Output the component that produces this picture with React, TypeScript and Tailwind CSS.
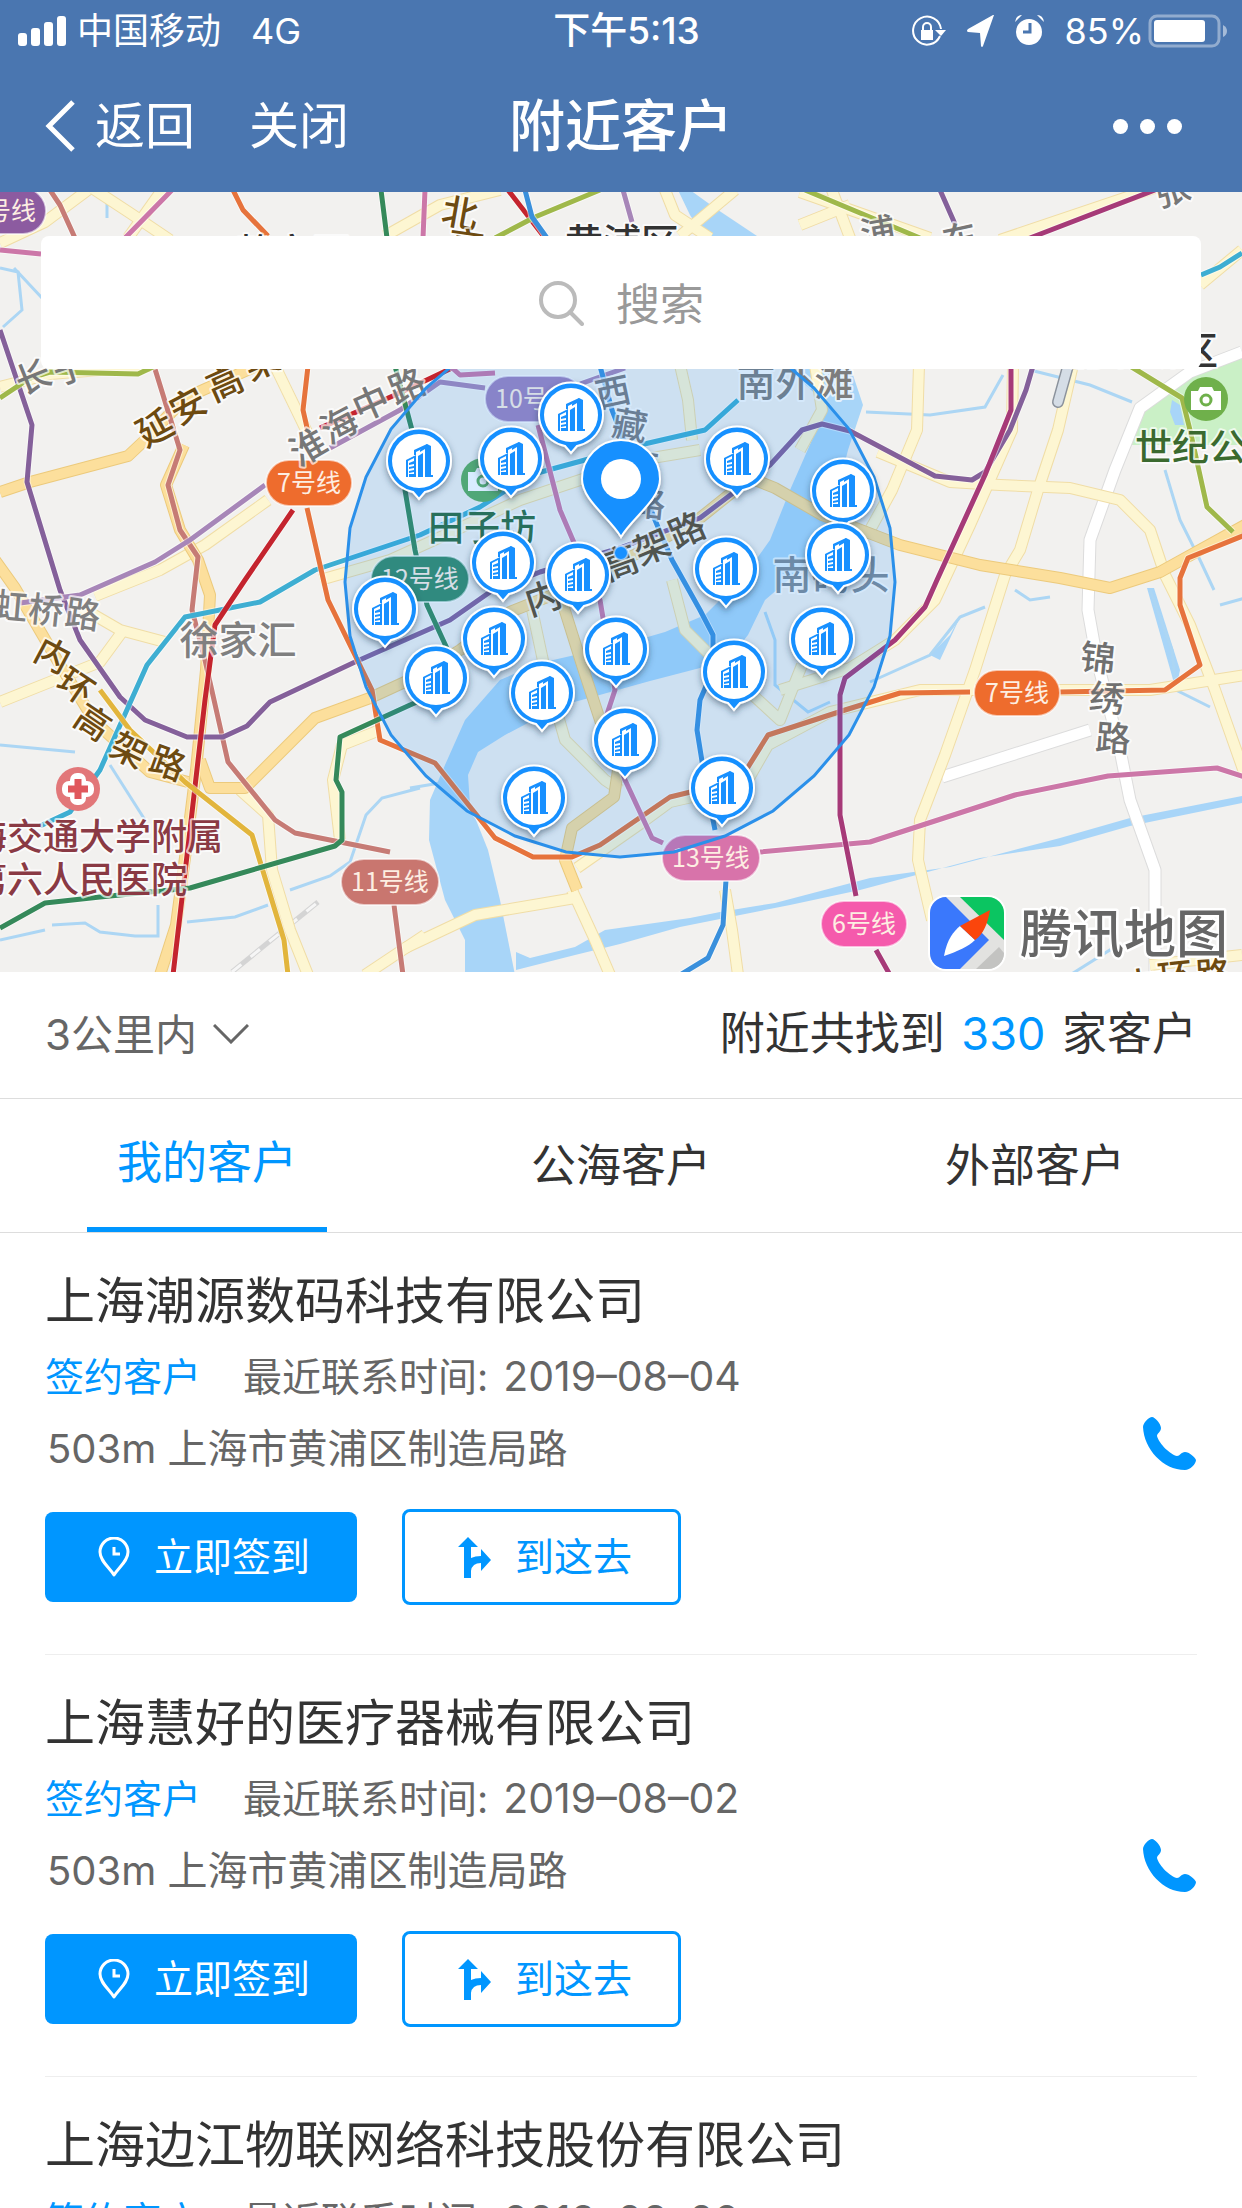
import { useState } from 'react'

interface Customer {
  name: string
  status: string
  lastContact: string
  distance: string
  address: string
}

const customers: Customer[] = [
  { name: '上海潮源数码科技有限公司', status: '签约客户', lastContact: '2019–08–04', distance: '503m', address: '上海市黄浦区制造局路' },
  { name: '上海慧好的医疗器械有限公司', status: '签约客户', lastContact: '2019–08–02', distance: '503m', address: '上海市黄浦区制造局路' },
  { name: '上海边江物联网络科技股份有限公司', status: '签约客户', lastContact: '2019–08–02', distance: '503m', address: '上海市黄浦区制造局路' },
]

const tabs = ['我的客户', '公海客户', '外部客户']

const markers = [
  [571, 415], [511, 459], [419, 461], [737, 459], [843, 491], [838, 555], [503, 563],
  [578, 575], [726, 569], [385, 609], [494, 639], [822, 639], [616, 649], [734, 672],
  [436, 678], [542, 693], [625, 740], [722, 788], [534, 798],
]

const yellowRoads = [
  'M0 243L45 222L88 190', 'M92 188L130 213L170 240', 'M162 190L128 238', 'M0 387L50 374L150 366',
  'M275 366L307 432', 'M95 596L160 570L205 545L268 500', 'M82 608L120 630L165 642', 'M122 632L100 662L50 682L0 702',
  'M240 790L268 815L272 870L290 930L308 975', 'M380 730L342 745L333 780L340 840', 'M385 236L440 205L500 190',
  'M320 580L390 560L430 542L520 500L640 460L700 450', 'M530 600L545 670L565 740L605 780L620 790',
  'M405 948L475 915L575 898', 'M572 890L595 940L610 975', 'M725 890L732 930L738 975',
  'M577 868L640 824L670 802L745 785L768 745L830 712L920 690L1150 690L1245 675',
  'M680 365L688 400L692 440', 'M672 580L685 630L720 665L780 720L802 665', 'M665 190L675 215L710 238', 'M680 236L735 190',
  'M830 185L850 238', 'M800 192L930 238', 'M800 225L850 205', 'M1000 240L1160 186', 'M1200 285L1242 250',
  'M919 365L917 430L892 490L870 530', 'M1072 369L1058 430L1038 490L1020 550L1005 575L975 670L945 755L920 820L918 860L932 920',
  'M878 452L950 482L1000 485L1070 488L1120 500L1150 530L1165 575L1190 625L1215 690L1245 775',
  'M1013 365L1012 430L970 525L935 600L895 640L850 668L780 690', 'M815 365L822 410L800 450', 'M1150 965L1242 955',
  'M365 975L425 935',
]

const orangeRoads = [
  'M0 492L30 482L128 456L145 440L185 398L270 360', 'M-5 560L15 588L60 665L95 722L150 772L188 782',
  'M184 445L166 485L180 530L198 560L210 595L206 670L196 770L186 850L176 925L160 975',
  'M200 760L210 788L245 788L315 718L370 698L420 675L460 650L510 612L560 592L640 552L700 518L750 478L775 488L822 515L900 545L980 565L1060 578L1110 588L1160 572L1245 525',
  'M560 595L582 665L600 720L618 770L614 797L572 828L565 860L577 890',
]

const whiteRoads = [
  'M1242 352L1190 372L1140 408L1115 470L1090 540L1088 610L1097 660L1120 750L1130 800L1155 870L1155 975',
  'M942 777L1090 730',
]

const streams = [
  'M0 745L75 752', 'M110 765L145 820', 'M420 788L382 798L366 815L350 862L330 876L290 890', 'M187 922L235 917L268 905',
  'M0 940L45 930', 'M52 925L85 923L100 932L135 936L158 936L158 905', 'M0 268L18 272L22 310L3 327', 'M14 268L42 298',
  'M107 202V218', 'M866 412L930 415L985 407L1003 375', 'M1030 370L1090 385L1132 402', 'M870 682L930 655L960 617L985 607',
  'M1015 590L1030 600L1050 597', 'M1150 590L1172 650L1176 690L1210 707', 'M1220 605L1245 598', 'M1165 470L1180 520L1200 560L1214 590',
  'M410 788L440 783', 'M765 612L775 640L775 685L808 712L830 702', 'M1070 975L1110 950L1150 938',
]

const metroLines: [string, string][] = [
  ['#c67b75', 'M50 190L60 205L75 238M155 369L180 450L168 485L180 530L198 557L192 610L205 660L228 762L275 820L295 833L390 852M394 905L403 975'],
  ['#84609a', 'M0 330L32 425L27 482L60 590L80 640L120 697L145 720L187 737L223 737L247 726L270 702L355 662L450 620L490 592L540 572L620 548L700 518L770 465L802 430L822 424L850 431L935 476L972 480L985 472L1010 430L1026 390L1033 366M955 224L940 190'],
  ['#a786b8', 'M265 485L190 540L155 562L80 595L20 603M330 448L400 410L440 382L485 388M580 384L625 368M623 190L632 222'],
  ['#3eaed2', 'M40 826L70 812L100 770L147 665L185 617L260 602L315 570L420 535L480 507L530 475L640 445L705 430L738 400M1201 275L1220 267L1242 253'],
  ['#c4242e', 'M293 510L245 580L215 625L205 700L190 830L173 975M320 428L395 395L452 368M508 190L545 238'],
  ['#e6733c', 'M233 190L243 210L268 236M308 366L303 410L308 432M307 508L328 600L372 690L380 740L435 763L495 838L533 857L572 857L600 845L670 797L740 780L768 735L845 710L900 693L970 692M1060 692L1165 690L1200 665L1180 605L1180 578L1188 558L1245 535'],
  ['#e2b53c', 'M100 690L130 730L185 782L252 835L284 940L288 975'],
  ['#35895a', 'M381 190L387 238M395 366L412 430L405 490L415 550L427 605L450 655L445 690L410 705L340 737L336 780L342 792L342 840L335 846L190 888L100 897L45 903L0 928'],
  ['#cc77a8', 'M172 190L125 238M0 250L41 254M425 190L423 238M450 366L460 375L495 373M538 425L560 510L575 545L600 600L615 690L605 720L625 780L652 838L663 843M760 852L870 842L1015 795L1108 776L1217 768L1245 777'],
  ['#a63a78', 'M1160 188L1030 238M1011 366L1011 410L985 475L937 580L925 607L895 640L845 678L840 695L840 815L856 896M876 950L890 975'],
  ['#9fb84a', 'M600 190L535 217L495 238M805 190L920 238M0 398L30 378L50 372L138 374L155 366M1130 366L1182 398L1190 430L1207 507L1233 532'],
  ['#3a90dc', 'M525 190L532 217L547 238M600 366L612 410L655 520L672 560L700 610L713 635L713 670L700 700L697 730L705 780L715 830M726 880L723 925L708 958L680 975'],
]

interface Pill {
  x: number
  y: number
  w: number
  text: string
  color: string
}

const pills: Pill[] = [
  { x: -52, y: 188, w: 98, text: '10号线', color: '#8c5ba0' },
  { x: 266, y: 460, w: 86, text: '7号线', color: '#ee6c2d' },
  { x: 485, y: 376, w: 98, text: '10号线', color: '#9f83be' },
  { x: 371, y: 556, w: 98, text: '12号线', color: '#368a65' },
  { x: 341, y: 859, w: 98, text: '11号线', color: '#c9766f' },
  { x: 662, y: 835, w: 98, text: '13号线', color: '#d873aa' },
  { x: 974, y: 670, w: 86, text: '7号线', color: '#ee6c2d' },
  { x: 821, y: 901, w: 86, text: '6号线', color: '#f55aac' },
]

// [text, centre x, centre y, size, colour, rotation]
const labels: [string, number, number, number, string, number][] = [
  ['延', 155, 428, 36, '#6d4a10', -28], ['安', 188, 406, 36, '#6d4a10', -28], ['高', 225, 383, 36, '#6d4a10', -24], ['架', 262, 362, 36, '#6d4a10', -24],
  ['淮', 308, 447, 36, '#777777', -30], ['海', 339, 425, 36, '#777777', -28], ['中', 371, 403, 36, '#777777', -24], ['路', 407, 386, 36, '#777777', -22],
  ['徐家汇', 238, 640, 39, '#808080', 0],
  ['虹', 10, 606, 35, '#808080', 5], ['桥', 46, 610, 35, '#808080', 6], ['路', 83, 614, 35, '#808080', 8],
  ['内', 53, 655, 35, '#6d4a10', 28], ['环', 76, 686, 35, '#6d4a10', 34], ['高', 93, 722, 35, '#6d4a10', 34], ['架', 129, 750, 35, '#6d4a10', 26], ['路', 168, 763, 35, '#6d4a10', 20],
  ['内', 543, 598, 36, '#5d4a2c', -18], ['环', 582, 578, 36, '#5d4a2c', -20], ['高', 620, 563, 36, '#5d4a2c', -20], ['架', 652, 547, 36, '#5d4a2c', -22], ['路', 687, 530, 36, '#5d4a2c', -24],
  ['西', 613, 392, 35, '#7b7b80', -12], ['藏', 630, 425, 35, '#7b7b80', 10], ['南', 641, 465, 35, '#7b7b80', 8], ['路', 648, 503, 35, '#7b7b80', 6],
  ['南外滩', 795, 382, 39, '#7d7d7d', 0], ['南码头', 831, 575, 39, '#7f8a96', 0],
  ['田子坊', 482, 528, 36, '#2c6a3c', 0], ['世纪公园', 1209, 447, 37, '#3b6a2f', 0],
  ['上海交通大学附属', 79, 837, 36, '#8a3a44', 0], ['第六人民医院', 79, 880, 36, '#8a3a44', 0],
  ['锦', 1098, 658, 35, '#707070', 6], ['绣', 1107, 698, 35, '#707070', 6], ['路', 1113, 738, 35, '#707070', 4],
  ['北', 460, 213, 36, '#6d4a10', 10], ['高', 466, 246, 36, '#6d4a10', 8],
  ['黄浦区', 622, 242, 38, '#333333', 0], ['静安区', 293, 252, 38, '#333333', 0], ['浦东新区', 1142, 350, 38, '#333333', 0],
  ['浦', 878, 232, 35, '#777777', -10], ['东', 960, 239, 35, '#777777', -12], ['张', 1172, 190, 35, '#777777', -18],
  ['长', 33, 377, 35, '#777777', -22], ['宁', 70, 368, 35, '#777777', -18],
  ['内', 1140, 985, 35, '#6d4a10', -8], ['环', 1175, 976, 35, '#6d4a10', -6], ['路', 1213, 974, 35, '#6d4a10', -4],
]

// search radius is drawn as a 32-sided ring
const ring = Array.from({ length: 32 }, (_, i) => {
  const a = (i * Math.PI) / 16
  return `${Math.round(620 + 275 * Math.sin(a))},${Math.round(582 - 275 * Math.cos(a))}`
}).join(' ')

function Roads({ paths, casing, fill, width }: { paths: string[]; casing: string; fill: string; width: number }) {
  return (
    <g fill="none" strokeLinejoin="round">
      {paths.map((d) => <path key={`c${d}`} d={d} stroke={casing} strokeWidth={width + 2} />)}
      {paths.map((d) => <path key={d} d={d} stroke={fill} strokeWidth={width} />)}
    </g>
  )
}

function CameraBadge({ x, y, color }: { x: number; y: number; color: string }) {
  return (
    <g transform={`translate(${x} ${y})`}>
      <circle r="22" fill={color} />
      <path d="M-15 -8H-8L-6 -12H6L8 -8H15V11H-15Z" fill="#fff" />
      <circle r="5" cy="1" fill="none" stroke={color} strokeWidth="3" />
    </g>
  )
}

function CustomerMarker({ x, y }: { x: number; y: number }) {
  return (
    <g transform={`translate(${x} ${y})`}>
      <path
        d="M-6 31A32 32 0 1 1 6 31L0 38Z"
        fill="#1890ff"
        stroke="#fff"
        strokeWidth="2"
        filter="url(#pinShadow)"
      />
      <circle r="27" fill="#fff" />
      <g fill="#1890ff">
        <path d="M1 -11L8 -17L12 -15V14H14V16H6V-12L1 -9Z" />
        <path d="M-1 -5L4 -8V16H-1Z" />
        <path d="M-13 -1L-3 -6V16H-5V-3L-11 0V16H-13Z" />
        <path d="M-10 2L-5 0V3L-10 4ZM-10 6L-5 5V7L-10 8ZM-10 10L-5 9V11L-10 12ZM-10 13H-5V16H-10Z" />
        <path d="M-5 -6V-11L8 -17L9 -15L-3 -9V-6Z" />
      </g>
    </g>
  )
}

function CityMap() {
  return (
    <svg
      viewBox="0 192 1242 780"
      preserveAspectRatio="xMidYMid slice"
      className="block h-[780px] w-full font-['Noto_Sans_CJK_SC',sans-serif]"
      role="img"
      aria-label="附近客户地图"
    >
      <defs>
        <filter id="pinShadow" x="-30%" y="-30%" width="160%" height="170%">
          <feDropShadow dx="0" dy="3" stdDeviation="3" floodColor="#1d3550" floodOpacity="0.5" />
        </filter>
      </defs>
      <rect y="192" width="1242" height="780" fill="#f2f1ef" />
      <path d="M1242 358L1195 374L1155 398L1130 425L1128 445H1242Z" fill="#caf0c6" />
      <path d="M1172 400L1180 405L1184 425L1175 425L1170 412Z" fill="#a8d5f8" />
      <g fill="#a8d5f8">
        <path d="M678 190H690L715 208L760 238H705L690 215Z" />
        <path d="M785 366H850L863 405L848 450L838 490L826 530L800 570L765 600L748 635L740 645L700 668L650 681L560 706L505 735L478 752L468 775L470 805L488 850L500 900L515 975H465V940L445 900L429 840L430 800L445 765L465 720L500 680L540 663L575 655L620 645L665 632L705 615L745 575L770 540L790 490L812 440L822 400Z" />
        <path d="M516 952L530 958L575 947L605 930L690 918L720 912L750 907L775 903L870 878L950 867L1060 838L1130 818L1242 796V803L1130 826L1060 846L980 858L860 890L790 905L740 915L680 927L620 944L575 955L516 970Z" />
        <path d="M930 655L950 635L962 613L940 660Z" />
        <path d="M1147 588H1154L1180 670L1176 690Z" />
      </g>
      <g fill="none" stroke="#acd6f4" strokeWidth="3">
        {streams.map((d) => <path key={d} d={d} />)}
      </g>
      <path d="M232 972L318 902" stroke="#d4d4d4" strokeWidth="5" />
      <path d="M232 972L318 902" stroke="#f6f6f6" strokeWidth="3" strokeDasharray="12 12" />
      <Roads paths={whiteRoads} casing="#dcdcdc" fill="#ffffff" width={11} />
      <Roads paths={yellowRoads} casing="#f0dda6" fill="#fdf6d2" width={10} />
      <Roads paths={orangeRoads} casing="#ecca7c" fill="#fcdf9c" width={10} />
      <path d="M1068 366L1058 402" stroke="#8b929c" strokeWidth="12" strokeLinecap="round" />
      <path d="M1068 366L1058 402" stroke="#d5dde6" strokeWidth="9" strokeLinecap="round" />
      <g fill="none" strokeLinejoin="round">
        {metroLines.map(([color, d]) => (
          <g key={color}>
            <path d={d} stroke="#fff" strokeOpacity="0.5" strokeWidth="7" />
            <path d={d} stroke={color} strokeWidth="5" />
          </g>
        ))}
      </g>
      <CameraBadge x={1206} y={399} color="#6fb04b" />
      <CameraBadge x={483} y={480} color="#5cac5c" />
      <circle cx="78" cy="789" r="22" fill="#e27779" />
      <g transform="translate(78 789)" fill="#fff">
        <rect x="-8" y="-16" width="16" height="32" rx="7" />
        <rect x="-16" y="-8" width="32" height="16" rx="7" />
        <path d="M0 -10V10M-10 0H10" stroke="#e0575c" strokeWidth="7" />
      </g>
      {pills.map((p) => (
        <g key={`${p.x}-${p.y}`}>
          <rect x={p.x} y={p.y} width={p.w} height="46" rx="23" fill={p.color} stroke="#fff" strokeOpacity="0.6" strokeWidth="2" />
          <text x={p.x + p.w / 2} y={p.y + 32} fontSize="25" textAnchor="middle" fill="#fdeee2">{p.text}</text>
        </g>
      ))}
      <g fontWeight="500" textAnchor="middle" stroke="#fff" strokeOpacity="0.7" strokeWidth="4" strokeLinejoin="round" paintOrder="stroke">
        {labels.map(([text, x, y, size, color, rotate]) => (
          <text
            key={`${text}-${x}-${y}`}
            fontSize={size}
            fill={color}
            transform={`translate(${x} ${y}) rotate(${rotate})`}
            y={Math.round(size * 0.37)}
          >
            {text}
          </text>
        ))}
      </g>
      <polygon points={ring} fill="#1890ff" fillOpacity="0.17" stroke="#2b90ea" strokeWidth="3" />
      {markers.map(([x, y]) => <CustomerMarker key={`${x}-${y}`} x={x} y={y} />)}
      <path
        d="M621 537C610 518 582 500 582 479A39 39 0 0 1 660 479C660 500 632 518 621 537Z"
        fill="#1890ff"
        stroke="#fff"
        strokeWidth="2"
        filter="url(#pinShadow)"
      />
      <circle cx="621" cy="479" r="20" fill="#fff" />
      <circle cx="621" cy="553" r="7" fill="#1890ff" stroke="#fff" strokeOpacity="0.5" strokeWidth="2" />
      <g transform="translate(930 897)">
        <clipPath id="logoClip"><rect width="74" height="72" rx="16" /></clipPath>
        <rect x="-2" y="-2" width="78" height="76" rx="18" fill="#fff" />
        <g clipPath="url(#logoClip)">
          <rect width="74" height="72" fill="#e2e2e0" />
          <path d="M0 0H16L59 43L30 72H0Z" fill="#3a78fc" />
          <path d="M30 0H74V43Z" fill="#0bc561" />
          <path d="M46 72L69 50L74 56V72Z" fill="#c3c3c1" />
          <path d="M14 59C17 42 24 34 30 29L45 43C38 50 28 54 14 59Z" fill="#fff" />
          <path d="M60 13L30 29L45 43C53 38 58 26 60 13Z" fill="#fb450c" />
        </g>
      </g>
      <text
        x="1020"
        y="953"
        fontSize="52"
        fontWeight="500"
        fill="#666"
        stroke="#fff"
        strokeWidth="5"
        strokeLinejoin="round"
        paintOrder="stroke"
      >
        腾讯地图
      </text>
    </svg>
  )
}

function StatusBar() {
  return (
    <div className="grid h-15 grid-cols-[1fr_auto_1fr] items-center pt-0.5 pr-[15px] pl-[18px] text-[36px] leading-[58px]">
      <div className="flex items-center gap-[10px]">
        <svg width="49" height="30" fill="#fff" aria-hidden="true">
          <rect y="17" width="9" height="13" rx="3" />
          <rect x="13" y="12" width="9" height="18" rx="3" />
          <rect x="26" y="6" width="9" height="24" rx="3" />
          <rect x="39" width="9" height="30" rx="3" />
        </svg>
        <span>中国移动</span>
        <span className="ml-5">4G</span>
      </div>
      <span className="pl-2 text-[37px] font-medium">下午5:13</span>
      <div className="flex items-center justify-end">
        <svg width="35" height="36" viewBox="0 0 35 36" className="mr-5" aria-hidden="true">
          <path d="M28 23A14 14 0 1 1 29 16" fill="none" stroke="#fff" strokeWidth="2" />
          <path d="M23 17H34L29 23Z" fill="#fff" />
          <path d="M9 17H21V27H9Z" fill="#fff" />
          <path d="M11 18V14A4 4 0 0 1 19 14V18" fill="none" stroke="#fff" strokeWidth="2" />
        </svg>
        <svg width="28" height="32" viewBox="0 0 28 32" className="mr-5" aria-hidden="true">
          <path d="M27 0L16 31Q15 33 14 31L13 18L1 17Q-1 16 1 14L26 0Z" fill="#fff" />
        </svg>
        <svg width="29" height="34" viewBox="0 0 29 34" className="mr-5" aria-hidden="true">
          <circle cx="14" cy="18" r="13" fill="#fff" />
          <path d="M0 8Q1 1 7 1ZM29 8Q28 1 22 1Z" fill="#fff" />
          <path d="M15 9V18H8" fill="none" stroke="#4a76b0" strokeWidth="3" />
        </svg>
        <span className="mr-1">85%</span>
        <svg width="79" height="34" viewBox="0 0 79 34" aria-hidden="true">
          <rect x="2" y="2" width="69" height="30" rx="7" fill="none" stroke="#fff" strokeOpacity="0.4" strokeWidth="3" />
          <rect x="6" y="6" width="51" height="22" rx="3" fill="#fff" />
          <path d="M75 11Q79 13 79 17T75 23Z" fill="#fff" fillOpacity="0.5" />
        </svg>
      </div>
    </div>
  )
}

function NavBar() {
  return (
    <div className="grid h-33 grid-cols-[1fr_auto_1fr] items-center px-[45px] text-[50px]">
      <div className="flex items-center gap-[54px]">
        <button type="button" className="flex items-center gap-5">
          <svg width="30" height="52" viewBox="0 0 30 52" fill="none" aria-hidden="true">
            <path d="M28 2L4 26L28 50" stroke="#fff" strokeWidth="5" />
          </svg>
          返回
        </button>
        <button type="button">关闭</button>
      </div>
      <h1 className="text-[56px] font-medium">附近客户</h1>
      <button type="button" aria-label="更多" className="mr-[15px] flex gap-3 justify-self-end">
        <span className="size-[15px] rounded-full bg-white" />
        <span className="size-[15px] rounded-full bg-white" />
        <span className="size-[15px] rounded-full bg-white" />
      </button>
    </div>
  )
}

function CustomerItem({ customer }: { customer: Customer }) {
  return (
    <li className="flex items-center border-b border-[#eeeeee]">
      <div className="flex-1 pt-9 pb-[49px]">
        <h2 className="text-[50px] leading-[64px] text-[#333333]">{customer.name}</h2>
        <p className="mt-4 flex gap-[42px] text-[39px] leading-[56px] text-[#666666]">
          <span className="text-[#0096ff]">{customer.status}</span>
          <span>
            最近联系时间: <time className="ml-1 text-[41px] leading-none">{customer.lastContact}</time>
          </span>
        </p>
        <p className="mt-4 pl-0.5 text-[40px] leading-[56px] text-[#666666]">
          {customer.distance} {customer.address}
        </p>
        <div className="mt-8 flex items-center gap-[45px] text-[39px]">
          <button type="button" className="flex h-[90px] w-[312px] items-center gap-6 rounded-lg bg-[#0096ff] pl-[53px] text-white">
            <svg width="32" height="40" viewBox="0 0 32 40" fill="none" stroke="#fff" strokeWidth="3" aria-hidden="true">
              <path d="M16 38C11 30 2 24 2 15A14 14 0 0 1 30 15C30 24 21 30 16 38Z" strokeLinejoin="round" />
              <path d="M16 10V17H22" />
            </svg>
            立即签到
          </button>
          <button type="button" className="flex h-24 w-[279px] items-center gap-6 rounded-lg border-3 border-[#0096ff] pl-[53px] text-[#0096ff]">
            <svg width="33" height="41" viewBox="0 0 33 41" fill="#0096ff" aria-hidden="true">
              <path d="M10 0L20 10H13V21Q17 19 23 19V12L33 23L23 34V26Q14 26 13 34V41H6V10H0Z" />
            </svg>
            到这去
          </button>
        </div>
      </div>
      <button type="button" aria-label="拨打电话">
        <svg width="54" height="54" viewBox="0 0 54 54" fill="#0096ff" aria-hidden="true">
          <path d="M9 0C6 0 0 6 0 10C1 32 20 53 42 53C47 53 53 47 53 43C52 40 46 35 42 35C38 35 37 39 34 39C28 38 16 27 14 19C14 16 18 15 18 11C18 7 12 0 9 0Z" />
        </svg>
      </button>
    </li>
  )
}

export default function App() {
  const [active, setActive] = useState(0)

  return (
    <div className="flex h-screen flex-col overflow-hidden bg-white font-['Inter','Noto_Sans_CJK_SC',sans-serif] text-[#333333]">
      <header className="shrink-0 bg-[#4a76b0] text-white">
        <StatusBar />
        <NavBar />
      </header>

      <div className="relative shrink-0">
        <CityMap />
        <label className="absolute inset-x-[41px] top-11 flex h-[133px] items-center justify-center gap-8 rounded-lg bg-white">
          <svg width="46" height="46" viewBox="0 0 46 46" fill="none" stroke="#bbbbbb" strokeWidth="4" aria-hidden="true">
            <circle cx="20" cy="20" r="17" />
            <path d="M32 32L44 44" strokeLinecap="round" />
          </svg>
          <input
            type="search"
            aria-label="搜索"
            placeholder="搜索"
            className="field-sizing-content min-w-[88px] text-[44px] outline-none placeholder:text-[#999999]"
          />
        </label>
      </div>

      <div className="flex h-[127px] shrink-0 items-center justify-between border-b border-[#dddddd] px-[45px] pb-0.5">
        <label className="flex items-center gap-4 text-[42px] text-[#666666]">
          <select aria-label="范围" defaultValue="3" className="appearance-none bg-transparent outline-none">
            <option value="1">1公里内</option>
            <option value="3">3公里内</option>
            <option value="5">5公里内</option>
          </select>
          <svg width="36" height="20" viewBox="0 0 36 20" fill="none" stroke="#666666" strokeWidth="3" aria-hidden="true">
            <path d="M1 1L18 18L35 1" />
          </svg>
        </label>
        <p className="text-[45px]">
          附近共找到 <span className="mx-1 text-[#0096ff]">330</span> 家客户
        </p>
      </div>

      <nav className="grid h-[134px] shrink-0 grid-cols-3 border-b border-[#dddddd] text-[45px]">
        {tabs.map((tab, i) => (
          <button
            key={tab}
            type="button"
            onClick={() => setActive(i)}
            className={
              i === active
                ? 'w-[240px] justify-self-center border-b-5 border-[#0096ff] text-[#0096ff]'
                : 'w-[240px] justify-self-center'
            }
          >
            {tab}
          </button>
        ))}
      </nav>

      <ul className="min-h-0 flex-1 overflow-y-auto px-[45px] [scrollbar-width:none]">
        {customers.map((customer) => (
          <CustomerItem key={customer.name} customer={customer} />
        ))}
      </ul>
    </div>
  )
}
